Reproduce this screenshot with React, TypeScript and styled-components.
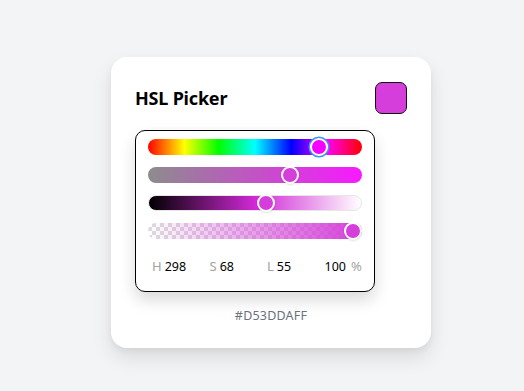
import * as React from "react"
import styled, { createGlobalStyle } from "styled-components"

const GlobalStyle = createGlobalStyle`
    html, body {
        margin: 0;
        padding: 0;
        background: #f3f4f6;
        font-family: "Noto Sans", "Open Sans", sans-serif;
    }
`

const h = 298
const s = 68
const l = 55
const a = 100
const TRACK = 214
const THUMB = 18

const pos = (fraction: number) => fraction * (TRACK - THUMB)

export default function App() {
    const color = `hsl(${h}, ${s}%, ${l}%)`
    const sliders = [
        {
            id: "hue",
            bg: "linear-gradient(to right, #f00 0%, #ff0 17%, #0f0 33%, #0ff 50%, #00f 67%, #f0f 83%, #f00 100%)",
            fraction: h / 360,
            fill: `hsl(${h}, 100%, 50%)`,
            focused: true,
        },
        {
            id: "sat",
            bg: `linear-gradient(to right, hsl(${h}, 0%, ${l}%), hsl(${h}, 100%, ${l}%))`,
            fraction: s / 100,
            fill: color,
        },
        {
            id: "light",
            bg: `linear-gradient(to right, hsl(${h}, ${s}%, 0%), hsl(${h}, ${s}%, 50%), hsl(${h}, ${s}%, 100%))`,
            fraction: l / 100,
            fill: color,
            bordered: true,
        },
        {
            id: "alpha",
            bg: `linear-gradient(to right, hsla(${h}, ${s}%, ${l}%, 0), hsla(${h}, ${s}%, ${l}%, 1)), repeating-conic-gradient(#dcdcdc 0% 25%, #ffffff 0% 50%) 0 0 / 8px 8px`,
            fraction: a / 100,
            fill: color,
        },
    ]

    return (
        <>
            <GlobalStyle />
            <Page>
                <Card>
                    <Header>
                        <Title>HSL Picker</Title>
                        <Swatch $color={color} />
                    </Header>
                    <Panel>
                        {sliders.map(sl => (
                            <Track key={sl.id} $bg={sl.bg} $bordered={sl.bordered}>
                                <Thumb $fill={sl.fill} $focused={sl.focused} style={{ left: pos(sl.fraction) }} />
                            </Track>
                        ))}
                        <Values>
                            <Field>
                                <Label>H</Label>
                                <Value>{h}</Value>
                            </Field>
                            <Field>
                                <Label>S</Label>
                                <Value>{s}</Value>
                            </Field>
                            <Field>
                                <Label>L</Label>
                                <Value>{l}</Value>
                            </Field>
                            <Field $last>
                                <Value>{a}</Value>
                                <Label>%</Label>
                            </Field>
                        </Values>
                    </Panel>
                    <Hex>#D53DDAFF</Hex>
                </Card>
            </Page>
        </>
    )
}

const Page = styled.div`
    width: 524px;
    height: 391px;
    display: flex;
    justify-content: center;
    padding: 57px 0 0 18px;
    box-sizing: border-box;
`

const Card = styled.div`
    width: 320px;
    height: 291px;
    box-sizing: border-box;
    padding: 25px 24px 0;
    background: #fff;
    border-radius: 16px;
    box-shadow: 0 10px 20px rgba(0, 0, 0, 0.1), 0 3px 6px rgba(0, 0, 0, 0.05);
    display: flex;
    flex-direction: column;
`

const Header = styled.div`
    display: flex;
    justify-content: space-between;
    align-items: center;
    height: 32px;
`

const Title = styled.h1`
    margin: 0;
    font-size: 18px;
    font-weight: 700;
    color: #000;
    letter-spacing: -0.2px;
`

const Swatch = styled.div<{ $color: string }>`
    width: 32px;
    height: 32px;
    box-sizing: border-box;
    border-radius: 7px;
    border: 1px solid #111;
    background: ${p => p.$color};
`

const Panel = styled.div`
    margin-top: 16px;
    width: 240px;
    height: 162px;
    box-sizing: border-box;
    padding: 8px 12px 0;
    border: 1px solid #000;
    border-radius: 10px;
    background: #fff;
    box-shadow: 0 8px 16px rgba(0, 0, 0, 0.15);
    display: flex;
    flex-direction: column;
    gap: 12px;
`

const Track = styled.div<{ $bg: string; $bordered?: boolean }>`
    position: relative;
    width: ${TRACK}px;
    height: 16px;
    box-sizing: border-box;
    border-radius: 8px;
    background: ${p => p.$bg};
    border: ${p => (p.$bordered ? "1px solid #e6e6e6" : "none")};
    flex-shrink: 0;
`

const Thumb = styled.div<{ $fill: string; $focused?: boolean }>`
    position: absolute;
    top: 50%;
    width: ${THUMB}px;
    height: ${THUMB}px;
    margin-top: -${THUMB / 2}px;
    box-sizing: border-box;
    border-radius: 50%;
    background: ${p => p.$fill};
    border: 2px solid #fff;
    box-shadow: ${p =>
        p.$focused ? "0 0 0 1.5px #3d95f2" : "0 1px 2px rgba(0, 0, 0, 0.12)"};
`

const Values = styled.div`
    margin-top: 4px;
    height: 22px;
    display: flex;
    align-items: center;
    padding-left: 4px;
`

const Field = styled.div<{ $last?: boolean }>`
    flex: 0 0 ${p => (p.$last ? "auto" : "57.5px")};
    display: flex;
    align-items: center;
    gap: ${p => (p.$last ? "5px" : "3px")};
    font-size: 12.5px;
`

const Label = styled.span`
    color: #a3a3a3;
    font-size: 13px;
`

const Value = styled.span`
    color: #000;
`

const Hex = styled.div`
    margin-top: 15px;
    text-align: center;
    font-size: 12.5px;
    color: #6b7280;
    letter-spacing: 0.2px;
`
